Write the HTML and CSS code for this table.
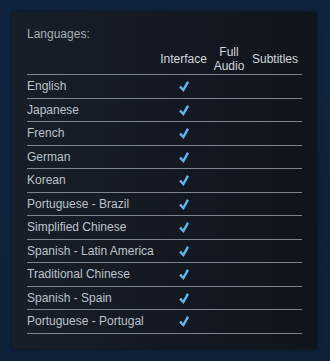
FILE: index.html
```html
<!DOCTYPE html>
<html lang="en">

<head>
    <meta charset="UTF-8">
    <meta name="viewport" content="width=device-width, initial-scale=1.0">
    <title>Languages</title>
    <link rel="stylesheet" href="styles.css">
</head>

<body>
    <div class="language-panel">
        <div class="panel-title">Languages:</div>
        <table class="language-table">
            <colgroup>
                <col class="col-name">
                <col class="col-interface">
                <col class="col-audio">
                <col class="col-subtitles">
            </colgroup>
            <thead>
                <tr>
                    <th></th>
                    <th>Interface</th>
                    <th>Full<br>Audio</th>
                    <th>Subtitles</th>
                </tr>
            </thead>
            <tbody>
                <tr><td>English</td><td class="check"><svg viewBox="0 0 10 11"><path d="M0 6.2 L2.4 4.8 L4 7.2 L8 0 L10 1.4 L4.6 11 Z"/></svg></td><td></td><td></td></tr>
                <tr><td>Japanese</td><td class="check"><svg viewBox="0 0 10 11"><path d="M0 6.2 L2.4 4.8 L4 7.2 L8 0 L10 1.4 L4.6 11 Z"/></svg></td><td></td><td></td></tr>
                <tr><td>French</td><td class="check"><svg viewBox="0 0 10 11"><path d="M0 6.2 L2.4 4.8 L4 7.2 L8 0 L10 1.4 L4.6 11 Z"/></svg></td><td></td><td></td></tr>
                <tr><td>German</td><td class="check"><svg viewBox="0 0 10 11"><path d="M0 6.2 L2.4 4.8 L4 7.2 L8 0 L10 1.4 L4.6 11 Z"/></svg></td><td></td><td></td></tr>
                <tr><td>Korean</td><td class="check"><svg viewBox="0 0 10 11"><path d="M0 6.2 L2.4 4.8 L4 7.2 L8 0 L10 1.4 L4.6 11 Z"/></svg></td><td></td><td></td></tr>
                <tr><td>Portuguese - Brazil</td><td class="check"><svg viewBox="0 0 10 11"><path d="M0 6.2 L2.4 4.8 L4 7.2 L8 0 L10 1.4 L4.6 11 Z"/></svg></td><td></td><td></td></tr>
                <tr><td>Simplified Chinese</td><td class="check"><svg viewBox="0 0 10 11"><path d="M0 6.2 L2.4 4.8 L4 7.2 L8 0 L10 1.4 L4.6 11 Z"/></svg></td><td></td><td></td></tr>
                <tr><td>Spanish - Latin America</td><td class="check"><svg viewBox="0 0 10 11"><path d="M0 6.2 L2.4 4.8 L4 7.2 L8 0 L10 1.4 L4.6 11 Z"/></svg></td><td></td><td></td></tr>
                <tr><td>Traditional Chinese</td><td class="check"><svg viewBox="0 0 10 11"><path d="M0 6.2 L2.4 4.8 L4 7.2 L8 0 L10 1.4 L4.6 11 Z"/></svg></td><td></td><td></td></tr>
                <tr><td>Spanish - Spain</td><td class="check"><svg viewBox="0 0 10 11"><path d="M0 6.2 L2.4 4.8 L4 7.2 L8 0 L10 1.4 L4.6 11 Z"/></svg></td><td></td><td></td></tr>
                <tr><td>Portuguese - Portugal</td><td class="check"><svg viewBox="0 0 10 11"><path d="M0 6.2 L2.4 4.8 L4 7.2 L8 0 L10 1.4 L4.6 11 Z"/></svg></td><td></td><td></td></tr>
            </tbody>
        </table>
    </div>
</body>

</html>
```

FILE: styles.css
```css
body {
    margin: 0;
    padding: 12px 13px 12px 12px;
    background: linear-gradient(160deg, #0f2440 0%, #10223a 60%, #0f2138 100%);
    font-family: Arial, "Liberation Sans", sans-serif;
    font-size: 12px;
    height: 337px;
}

.language-panel {
    height: 337px;
    box-sizing: border-box;
    padding: 15px 15px 0 15px;
    background: linear-gradient(90deg, #181e27 0%, #141921 55%, #10141b 100%);
    box-shadow: 0 0 4px rgba(0, 0, 0, 0.5);
}

.panel-title {
    color: #a9b1b9;
    line-height: 14px;
    height: 17px;
}

.language-table {
    width: 275px;
    table-layout: fixed;
    border-collapse: collapse;
    border-spacing: 0;
}

.col-name { width: 130px; }
.col-interface { width: 53px; }
.col-audio { width: 38px; }
.col-subtitles { width: 54px; }

.language-table th {
    font-weight: normal;
    color: #d0d6dc;
    line-height: 14px;
    height: 29px;
    padding: 0 0 1px 0;
    vertical-align: middle;
    text-align: center;
    border-bottom: 1px solid #7c848d;
}

.language-table td {
    color: #bcc4cc;
    height: 22.5px;
    padding: 0;
    vertical-align: middle;
    text-align: left;
    border-bottom: 1px solid #7c848d;
    white-space: nowrap;
}

.language-table td.check {
    text-align: center;
}

.check svg {
    width: 10px;
    height: 11px;
    display: inline-block;
    vertical-align: middle;
    margin-top: -1px;
    fill: #5fb6f0;
}
```
